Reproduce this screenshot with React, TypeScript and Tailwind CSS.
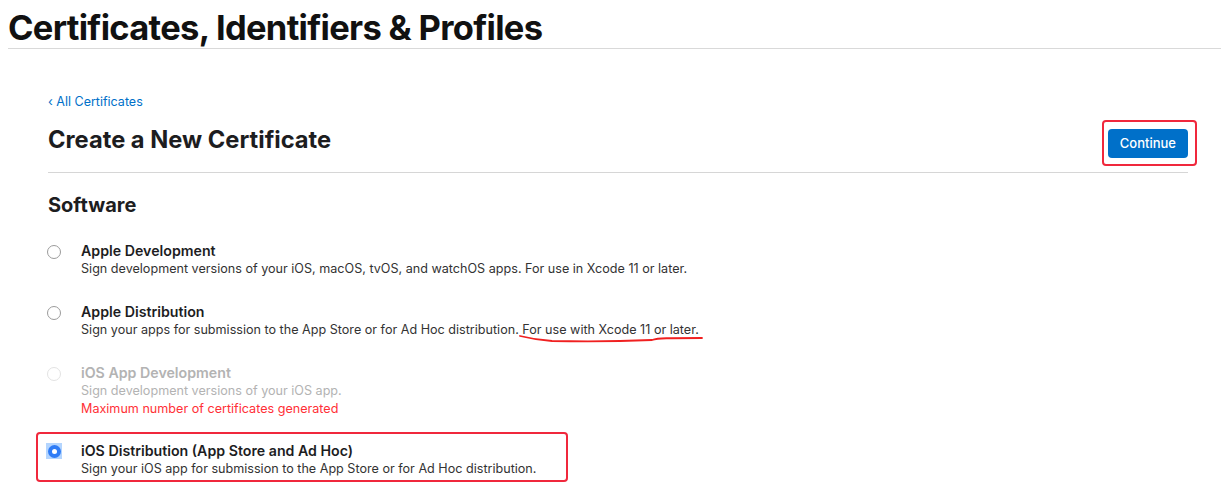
import React from "react";

type Option = {
  title: string;
  desc: React.ReactNode;
  disabled?: boolean;
  selected?: boolean;
  note?: string;
  boxed?: boolean;
};

const Radio = ({ selected, disabled }: { selected?: boolean; disabled?: boolean }) => {
  if (selected) {
    return (
      <span className="-ml-[2px] -mt-[2px] flex h-[16px] w-[16px] items-center justify-center bg-[#b4d5fe]">
        <span className="flex h-[13px] w-[13px] items-center justify-center rounded-full bg-[#2f7cf6]">
          <span className="h-[5px] w-[5px] rounded-full bg-white" />
        </span>
      </span>
    );
  }
  return (
    <span
      className={
        disabled
          ? "-ml-px block h-[14px] w-[14px] rounded-full border border-[#e3e3e3] bg-white"
          : "-ml-px block h-[14px] w-[14px] rounded-full border border-[#9b9b9b] bg-white"
      }
    />
  );
};

const options: Option[] = [
  {
    title: "Apple Development",
    desc: "Sign development versions of your iOS, macOS, tvOS, and watchOS apps. For use in Xcode 11 or later.",
  },
  {
    title: "Apple Distribution",
    desc: (
      <>
        Sign your apps for submission to the App Store or for Ad Hoc distribution.{" "}
        <span className="relative">
          For use with Xcode 11 or later.
          <svg
            className="absolute left-[-4px] top-[12px]"
            width="186"
            height="10"
            viewBox="0 0 186 10"
            fill="none"
          >
            <path
              d="M2 2 C 10 4, 18 6, 34 7 C 74 8, 112 7, 134 6 C 140 4, 150 4, 184 4"
              stroke="#f02020"
              strokeWidth="1.8"
              strokeLinecap="round"
            />
          </svg>
        </span>
      </>
    ),
  },
  {
    title: "iOS App Development",
    desc: "Sign development versions of your iOS app.",
    disabled: true,
    note: "Maximum number of certificates generated",
  },
  {
    title: "iOS Distribution (App Store and Ad Hoc)",
    desc: "Sign your iOS app for submission to the App Store or for Ad Hoc distribution.",
    selected: true,
    boxed: true,
  },
];

const OptionRow = ({ o }: { o: Option }) => {
  const inner = (
    <div className="flex">
      <div className="flex w-[33px] shrink-0 items-start pt-[3px]">
        <Radio selected={o.selected} disabled={o.disabled} />
      </div>
      <div>
        <div
          className={
            o.disabled
              ? "text-[14.2px] font-semibold leading-[18px] text-[#b3b3b3]"
              : "text-[14.2px] font-semibold leading-[18px] text-[#1d1d1f]"
          }
        >
          {o.title}
        </div>
        <div
          className={
            o.disabled
              ? "text-[12.6px] leading-[18px] text-[#b3b3b3]"
              : "text-[12.6px] leading-[18px] text-[#333333]"
          }
        >
          {o.desc}
        </div>
        {o.note && <div className="text-[12.6px] leading-[18px] text-[#ff3037]">{o.note}</div>}
      </div>
    </div>
  );

  if (o.boxed) {
    return (
      <div className="-ml-[12px] -mt-[11px] w-[532px] rounded-[4px] border-2 border-[#f0283c] pb-[2px] pl-[10px] pt-[8px]">
        {inner}
      </div>
    );
  }
  return inner;
};

export default function App() {
  return (
    <div className="h-[488px] w-[1221px] overflow-hidden bg-white font-['Inter',sans-serif] text-[#1d1d1f]">
      <header className="ml-2 h-[49px] border-b border-[#d9d9d9]">
        <h1 className="pt-[7px] text-[34.5px] font-bold leading-[42px] tracking-[-0.02em] text-[#111111]">
          Certificates, Identifiers &amp; Profiles
        </h1>
      </header>

      <main className="ml-12 mr-[33px]">
        <a className="mt-[45px] block text-[12.5px] leading-[16px] text-[#0070c9]" href="#">
          ‹ All Certificates
        </a>

        <div className="flex h-[63px] items-start justify-between border-b border-[#d6d6d6]">
          <h2 className="mt-[16px] text-[23.7px] font-bold leading-[28px] text-[#1d1d1f]">
            Create a New Certificate
          </h2>
          <div className="-mr-[9px] mt-[10px] rounded-[4px] border-2 border-[#f0283c] pb-[6px] pl-[4px] pr-[7px] pt-[7px]">
            <button className="block h-[29px] rounded-[4px] bg-[#0070c9] px-[12px] text-[13px] font-medium text-white">
              Continue
            </button>
          </div>
        </div>

        <h3 className="mt-[20px] text-[20px] font-bold leading-[24px] text-[#1d1d1f]">Software</h3>

        <div className="mt-[25px] flex flex-col gap-[25px]">
          {options.map((o) => (
            <OptionRow key={o.title} o={o} />
          ))}
        </div>
      </main>
    </div>
  );
}
